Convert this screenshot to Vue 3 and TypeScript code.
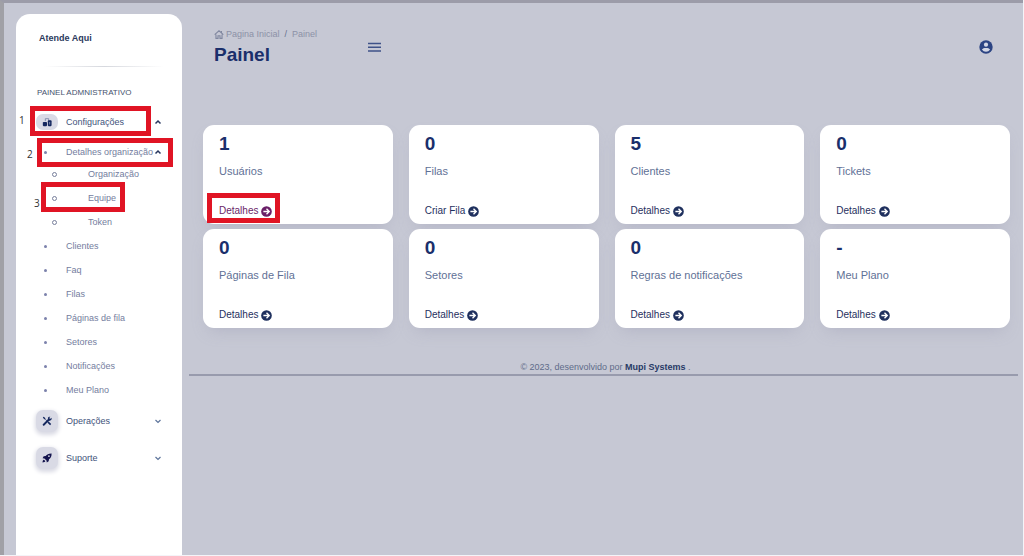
<script setup lang="ts">
interface Stat {
  value: string
  label: string
  action: string
  marked?: boolean
}

const organization = [
  { name: 'Organização', step: 0 },
  { name: 'Equipe', step: 3 },
  { name: 'Token', step: 0 },
]

const settings = ['Clientes', 'Faq', 'Filas', 'Páginas de fila', 'Setores', 'Notificações', 'Meu Plano']

const stats: Stat[] = [
  { value: '1', label: 'Usuários', action: 'Detalhes', marked: true },
  { value: '0', label: 'Filas', action: 'Criar Fila' },
  { value: '5', label: 'Clientes', action: 'Detalhes' },
  { value: '0', label: 'Tickets', action: 'Detalhes' },
  { value: '0', label: 'Páginas de Fila', action: 'Detalhes' },
  { value: '0', label: 'Setores', action: 'Detalhes' },
  { value: '0', label: 'Regras de notificações', action: 'Detalhes' },
  { value: '-', label: 'Meu Plano', action: 'Detalhes' },
]
</script>

<template>
  <div class="page">
    <aside class="sidebar">
      <a class="brand" href="#">Atende Aqui</a>
      <hr class="divider" />
      <h2 class="section">PAINEL ADMNISTRATIVO</h2>
      <nav aria-label="Painel administrativo">
        <ul class="menu">
          <li>
            <button class="group first" type="button" aria-expanded="true">
              <span class="tile flat">
                <svg viewBox="0 0 12 12" width="10" height="10" aria-hidden="true">
                  <path d="M4 5V2h4v3" fill="none" stroke="#7a86a8" stroke-width="1" />
                  <rect x="1" y="6" width="5" height="5" rx="1" fill="#14275e" />
                  <rect x="7" y="4" width="4.500" height="7" rx="1" fill="#14275e" />
                  <path d="M9.200 6v3" stroke="#aeb6cf" stroke-width=".8" />
                </svg>
              </span>
              <span class="name">Configurações</span>
              <svg class="chevron dark" viewBox="0 0 8 8" aria-hidden="true"><path d="M1.500 5.500 4 3l2.500 2.500" /></svg>
              <span class="mark mark-one"></span>
              <span class="step step-one">1</span>
            </button>
            <ul class="menu">
              <li>
                <button class="row wide" type="button" aria-expanded="true">
                  <span class="dot"></span>
                  <span class="name">Detalhes organização</span>
                  <svg class="chevron dark" viewBox="0 0 8 8" aria-hidden="true"><path d="M1.500 5.500 4 3l2.500 2.500" /></svg>
                  <span class="mark mark-two"></span>
                  <span class="step step-two">2</span>
                </button>
                <ul class="menu">
                  <li v-for="item in organization" :key="item.name">
                    <a class="row nested" href="#">
                      <span class="ring"></span>
                      <span>{{ item.name }}</span>
                      <template v-if="item.step">
                        <span class="mark mark-three"></span>
                        <span class="step step-three">{{ item.step }}</span>
                      </template>
                    </a>
                  </li>
                </ul>
              </li>
              <li v-for="item in settings" :key="item">
                <a class="row" href="#"><span class="dot"></span><span>{{ item }}</span></a>
              </li>
            </ul>
          </li>
          <li>
            <button class="group" type="button" aria-expanded="false">
              <span class="tile">
                <svg viewBox="0 0 12 12" width="10" height="10" aria-hidden="true">
                  <path d="m2 10.500 6-6" stroke="#14275e" stroke-width="2.200" stroke-linecap="round" />
                  <path d="M7 2.500A2.500 2.500 0 0 1 10 1L8.700 2.500l1 1L11.200 2A2.500 2.500 0 0 1 8 5.500Z" fill="#14275e" />
                  <path d="m1 1.500 1.200-.7L4 2.700v1l3 3 1-.2 3 3.200-1.300 1.400-3-3V7L3.500 4h-1Z" fill="#14275e" />
                </svg>
              </span>
              <span class="name">Operações</span>
              <svg class="chevron" viewBox="0 0 8 8" aria-hidden="true"><path d="M1.500 3 4 5.500 6.500 3" /></svg>
            </button>
          </li>
          <li>
            <button class="group" type="button" aria-expanded="false">
              <span class="tile">
                <svg viewBox="0 0 12 12" width="10" height="10" aria-hidden="true">
                  <path d="M11.500.5C8 .4 6 1.500 4.400 3.600L2 4 .7 6.400l2.200.2 2.500 2.500.3 2.300L8 10l.4-2.400C10.500 6 11.600 4 11.500.5Z" fill="#14144e" />
                  <circle cx="8.300" cy="3.800" r="1" fill="#d5d7e3" />
                  <path d="M2.300 8C1 8.300.7 9.500.6 11.400 2.500 11.300 3.700 11 4 9.700Z" fill="#14144e" />
                </svg>
              </span>
              <span class="name">Suporte</span>
              <svg class="chevron" viewBox="0 0 8 8" aria-hidden="true"><path d="M1.500 3 4 5.500 6.500 3" /></svg>
            </button>
          </li>
        </ul>
      </nav>
    </aside>

    <div class="content">
      <header class="topbar">
        <div class="heading">
          <nav class="crumbs" aria-label="Caminho">
            <a href="#">
              <svg viewBox="0 0 12 11" width="10" height="9" aria-hidden="true">
                <path d="M.7 5.700 6 1l5.300 4.700M9 3V1.200M2.300 5.500v4.700h2.500V7h2.400v3.200h2.500V5.500" fill="none" stroke="#8188a0" stroke-width="1.400" />
              </svg>
              <span>Pagina Inicial</span>
            </a>
            <span class="slash">/</span>
            <span>Painel</span>
          </nav>
          <h1>Painel</h1>
        </div>
        <button class="icon-button" type="button" aria-label="Alternar menu">
          <svg viewBox="0 0 13 10" width="13" height="10" aria-hidden="true">
            <path d="M0 1.500h13M0 5.200h13M0 8.900h13" stroke="#3f5288" stroke-width="1.500" />
          </svg>
        </button>
        <button class="icon-button account" type="button" aria-label="Conta">
          <svg viewBox="0 0 14 14" width="14" height="14" aria-hidden="true">
            <circle cx="7" cy="7" r="6.700" fill="#2c4483" />
            <circle cx="7" cy="4.700" r="2.100" fill="#d3d7e5" />
            <path d="M2.900 9.600C3.500 8.300 5.200 7.900 7 7.900s3.500.4 4.100 1.700A4.900 4.900 0 0 1 7 11.800a4.900 4.900 0 0 1-4.100-2.200Z" fill="#d3d7e5" />
          </svg>
        </button>
      </header>

      <main class="stats">
        <article v-for="stat in stats" :key="stat.label" class="card">
          <strong class="value">{{ stat.value }}</strong>
          <span class="label">{{ stat.label }}</span>
          <a class="action" :class="{ visited: stat.marked }" href="#">
            <span>{{ stat.action }}</span>
            <svg viewBox="0 0 12 12" width="11" height="11" aria-hidden="true">
              <circle cx="6" cy="6" r="5.800" fill="currentColor" />
              <path d="M2.600 6h6M6 3l3 3-3 3" fill="none" stroke="#fff" stroke-width="1.500" />
            </svg>
            <span v-if="stat.marked" class="mark mark-card"></span>
          </a>
        </article>
      </main>

      <footer class="footer">© 2023, desenvolvido por <a href="#">Mupi Systems</a> .</footer>
    </div>
  </div>
</template>

<style>
body {
  margin: 0;
  background: #f4f4f8;
}
</style>

<style scoped>
.page {
  box-sizing: border-box;
  display: flex;
  gap: 7px;
  min-height: calc(100vh - 1px);
  margin-right: 1px;
  padding: 11px 5px 0 12px;
  border-top: 3px solid #9c9ca9;
  border-left: 4px solid #a0a0a6;
  background: #c6c8d4;
  font-family: "Liberation Sans", Arial, sans-serif;
  font-size: 9px;
  color: #5f6c8a;
}

a {
  color: inherit;
  text-decoration: none;
}

button {
  border: 0;
  background: none;
  font: inherit;
  color: inherit;
  text-align: left;
  cursor: pointer;
}

.sidebar {
  box-sizing: border-box;
  flex: 0 0 166px;
  padding: 16px 16px 0 20px;
  border-radius: 14px 14px 0 0;
  background: #fff;
}

.brand {
  display: block;
  padding-left: 3px;
  line-height: 16px;
  font-weight: 700;
  color: #2b395c;
}

.divider {
  height: 1px;
  margin: 20px 2px 18px 8px;
  border: 0;
  background: linear-gradient(90deg, transparent, #d6d8de, transparent);
}

.section {
  margin: 0;
  padding-left: 1px;
  font-size: 8px;
  line-height: 16px;
  font-weight: 400;
  color: #46526e;
}

.menu {
  margin: 0;
  padding: 0;
  list-style: none;
}

.group,
.row {
  position: relative;
  box-sizing: border-box;
  display: flex;
  align-items: center;
  width: 100%;
}

.group {
  height: 37px;
  padding: 0 4px 0 0;
  color: #41527a;
}

.group.first {
  height: 42px;
}

.row {
  height: 24px;
  padding: 0 4px 0 8px;
  color: #747d9e;
}

.row.wide {
  height: 18px;
  margin-bottom: 1px;
}

.row.nested {
  padding-left: 16px;
}

.name {
  flex: 1;
}

.tile {
  display: flex;
  align-items: center;
  justify-content: center;
  width: 22px;
  height: 22px;
  margin-right: 8px;
  border-radius: 7px;
  background: #d9dae5;
  box-shadow: 0 2px 4px 1px #d9dae4;
}

.tile.flat {
  height: 16px;
  box-shadow: none;
}

.dot {
  width: 3px;
  height: 3px;
  margin-right: 19px;
  border-radius: 50%;
  background: #7c82ac;
}

.ring {
  box-sizing: border-box;
  width: 5px;
  height: 5px;
  margin-right: 31px;
  border: 1px solid #777f9b;
  border-radius: 50%;
}

.chevron {
  width: 8px;
  height: 8px;
  fill: none;
  stroke: #5d749b;
  stroke-width: 1.2;
}

.chevron.dark {
  stroke: #27365e;
  stroke-width: 1.5;
}

.mark {
  position: absolute;
  border: 5px solid #e01424;
  pointer-events: none;
}

.mark-one {
  inset: 5px 15px 7px -6px;
}

.mark-two {
  inset: -5px -7px -6px 1px;
}

.mark-three {
  inset: -4px 41px -2px 5px;
}

.mark-card {
  inset: -10px -8px -4px -12px;
}

.step {
  position: absolute;
  font-family: "Open Sans", "Noto Sans", sans-serif;
  font-size: 10px;
  line-height: 12px;
  color: #333;
}

.step-one {
  top: 13px;
  left: -17px;
}

.step-two {
  top: 5px;
  left: -9px;
}

.step-three {
  top: 11px;
  left: -2px;
}

.content {
  flex: 1;
  min-width: 0;
}

.topbar {
  display: flex;
  align-items: center;
  height: 66px;
  padding: 0 25px;
}

.heading {
  width: 154px;
}

.crumbs,
.crumbs a {
  display: flex;
  align-items: center;
}

.crumbs {
  gap: 5px;
  line-height: 12px;
  color: #8c91a7;
}

.crumbs a {
  gap: 2px;
}

.slash {
  color: #67708c;
}

h1 {
  margin: 4px 0 0;
  font-size: 19px;
  line-height: 22px;
  color: #1a2f6b;
}

.icon-button {
  display: flex;
  padding: 0;
}

.account {
  margin-left: auto;
}

.stats {
  display: grid;
  grid-template-columns: repeat(4, 1fr);
  gap: 5px 16px;
  margin-top: 45px;
  padding: 0 8px 0 14px;
}

.card {
  display: flex;
  flex-direction: column;
  align-items: flex-start;
  height: 86px;
  padding: 8px 16px 5px;
  border-radius: 11px;
  background: #fff;
  box-shadow: 0 8px 16px -6px rgba(150, 150, 175, 0.4);
}

.value {
  font-size: 19px;
  line-height: 22px;
  color: #1a2f6b;
}

.label {
  margin-top: 8px;
  font-size: 11px;
  line-height: 16px;
  color: #5f7196;
}

.action {
  position: relative;
  display: flex;
  align-items: center;
  gap: 3px;
  margin-top: auto;
  font-size: 10px;
  line-height: 16px;
  color: #1f305e;
}

.action.visited {
  color: #6a1f68;
}

.footer {
  margin-top: 32px;
  padding-left: 4px;
  border-bottom: 2px solid #989bad;
  line-height: 14px;
  text-align: center;
}

.footer a {
  font-weight: 700;
  color: #283a66;
}
</style>
